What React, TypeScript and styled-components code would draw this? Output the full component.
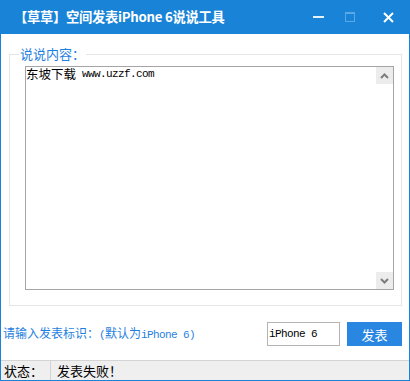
import React from "react";
import styled, { createGlobalStyle } from "styled-components";

const Global = createGlobalStyle`
  html, body { margin: 0; padding: 0; background: #ffffff; }
  * { box-sizing: border-box; }
`;

const BLUE = "#1883d7";
const TEXT_BLUE = "#1f7fdf";
const CJK = `"Noto Sans CJK SC", "Microsoft YaHei", sans-serif`;
const MONO = `"Liberation Mono", "Noto Sans CJK SC", monospace`;

const Window = styled.div`
  width: 410px;
  height: 381px;
  display: flex;
  flex-direction: column;
  border: 1px solid ${BLUE};
  border-top: none;
  background: #ffffff;
  font-family: ${CJK};
`;

const TitleBar = styled.div`
  height: 34px;
  margin: 0 -1px;
  background: ${BLUE};
  display: flex;
  align-items: center;
  padding-left: 14px;
  color: #ffffff;
`;

const Title = styled.div`
  flex: 1;
  font-size: 13.3px;
  font-weight: 700;
  letter-spacing: -0.3px;
  line-height: 18px;
  padding-bottom: 1px;
`;

const Controls = styled.div`
  display: flex;
  align-items: center;
  height: 100%;
`;

const CtrlButton = styled.div<{ $w: number }>`
  width: ${(p) => p.$w}px;
  height: 34px;
  display: flex;
  align-items: center;
  justify-content: center;
`;

const GroupBox = styled.fieldset`
  margin: 12px 7px 0 8px;
  height: 260px;
  border: 1px solid #e6e6e6;
  padding: 0 7px 15px 15px;
  min-width: 0;
`;

const Legend = styled.legend`
  color: ${TEXT_BLUE};
  font-size: 13px;
  line-height: 16px;
  padding: 0 1px;
  margin-left: -6px;
`;

const TextBox = styled.div`
  margin-top: 4px;
  height: 224px;
  border: 1px solid #a5a5a5;
  display: flex;
`;

const TextContent = styled.div`
  flex: 1;
  display: flex;
  align-items: flex-start;
  height: 14px;
  color: #000;
`;

const CjkSpan = styled.span`
  font-family: ${CJK};
  font-size: 12.5px;
  line-height: 14px;
`;

const MonoSpan = styled.span`
  font-family: ${MONO};
  font-size: 11px;
  line-height: 14px;
  letter-spacing: -0.6px;
  white-space: pre;
`;

const ScrollBar = styled.div`
  width: 17px;
  display: flex;
  flex-direction: column;
  justify-content: space-between;
`;

const ScrollArrow = styled.div`
  height: 17px;
  background: #ececec;
  display: flex;
  align-items: center;
  justify-content: center;
`;

const BottomRow = styled.div`
  margin: 16px 7px 0 2px;
  height: 24px;
  display: flex;
  align-items: center;
`;

const Prompt = styled.div`
  flex: 1;
  color: ${TEXT_BLUE};
  font-size: 12px;
  line-height: 16px;
`;

const PromptMono = styled.span`
  font-family: ${MONO};
  font-size: 11px;
  letter-spacing: -0.6px;
`;

const Input = styled.div`
  width: 73px;
  height: 24px;
  border: 1px solid #b4b4b4;
  font-family: ${MONO};
  font-size: 11px;
  letter-spacing: -0.6px;
  line-height: 22px;
  padding-left: 1px;
  color: #000;
`;

const Button = styled.div`
  margin-left: 7px;
  width: 55px;
  height: 24px;
  background: #2a87e1;
  color: #ffffff;
  font-size: 13px;
  display: flex;
  align-items: center;
  justify-content: center;
`;

const StatusBar = styled.div`
  margin-top: auto;
  height: 20px;
  border-top: 1px solid #d4d4d4;
  background: #efefef;
  display: flex;
  align-items: center;
  font-size: 13px;
  color: #000;
`;

const StatusCell = styled.div<{ $w?: number }>`
  ${(p) => (p.$w ? `width: ${p.$w}px;` : "flex: 1;")}
  height: 100%;
  display: flex;
  align-items: center;
  padding-left: ${(p) => (p.$w ? 3 : 6)}px;
  border-right: ${(p) => (p.$w ? "1px solid #d4d4d4" : "none")};
  line-height: 16px;
`;

export default function App() {
  return (
    <>
      <Global />
      <Window>
        <TitleBar>
          <Title>【草草】空间发表iPhone 6说说工具</Title>
          <Controls>
            <CtrlButton $w={32}>
              <svg width="11" height="2" viewBox="0 0 11 2">
                <rect x="0" y="0" width="11" height="2" fill="#e8f2fb" />
              </svg>
            </CtrlButton>
            <CtrlButton $w={32}>
              <svg width="10" height="10" viewBox="0 0 10 10">
                <rect x="0.5" y="0.5" width="9" height="9" fill="none" stroke="#5aa8e6" />
                <rect x="0" y="0" width="10" height="2" fill="#5aa8e6" />
              </svg>
            </CtrlButton>
            <CtrlButton $w={44}>
              <svg width="11" height="11" viewBox="0 0 11 11">
                <path d="M1 1 L10 10 M10 1 L1 10" stroke="#ffffff" strokeWidth="2" />
              </svg>
            </CtrlButton>
          </Controls>
        </TitleBar>

        <GroupBox>
          <Legend>说说内容：</Legend>
          <TextBox>
            <TextContent>
              <CjkSpan>东坡下载</CjkSpan>
              <MonoSpan> www.uzzf.com</MonoSpan>
            </TextContent>
            <ScrollBar>
              <ScrollArrow>
                <svg width="9" height="6" viewBox="0 0 9 6">
                  <path d="M1 5 L4.5 1.5 L8 5" fill="none" stroke="#7d7d7d" strokeWidth="2" />
                </svg>
              </ScrollArrow>
              <ScrollArrow>
                <svg width="9" height="6" viewBox="0 0 9 6">
                  <path d="M1 1 L4.5 4.5 L8 1" fill="none" stroke="#7d7d7d" strokeWidth="2" />
                </svg>
              </ScrollArrow>
            </ScrollBar>
          </TextBox>
        </GroupBox>

        <BottomRow>
          <Prompt>
            请输入发表标识：<PromptMono>(</PromptMono>默认为<PromptMono>iPhone 6)</PromptMono>
          </Prompt>
          <Input>iPhone 6</Input>
          <Button>发表</Button>
        </BottomRow>

        <StatusBar>
          <StatusCell $w={50}>状态：</StatusCell>
          <StatusCell>发表失败！</StatusCell>
        </StatusBar>
      </Window>
    </>
  );
}
